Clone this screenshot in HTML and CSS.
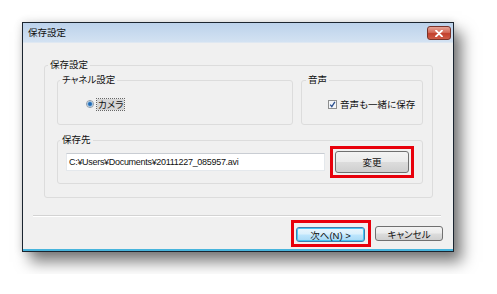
FILE: index.html
```html
<!DOCTYPE html>
<html lang="ja">
<head>
  <meta charset="UTF-8">
  <title>保存設定</title>
  <link rel="stylesheet" href="styles.css">
</head>
<body>
  <div class="dialog">
    <div class="titlebar">
      <span class="title">保存設定</span>
      <span class="close-btn">
        <svg width="8" height="7" viewBox="0 0 8 7"><path d="M1 0.5 L7 6.5 M7 0.5 L1 6.5" stroke="#fff" stroke-width="1.8" stroke-linecap="round"/></svg>
      </span>
    </div>
    <div class="dialog-body">
      <div class="group group-outer">
        <span class="group-label">保存設定</span>
        <div class="group-row">
          <div class="group group-channel">
            <span class="group-label">チャネル設定</span>
            <div class="option option-radio">
              <span class="radio"></span>
              <span class="focus-label">カメラ</span>
            </div>
          </div>
          <div class="group group-audio">
            <span class="group-label">音声</span>
            <div class="option option-check">
              <svg class="checkbox" width="9" height="9" viewBox="0 0 9 9">
                <rect x="0.5" y="0.5" width="8" height="8" fill="#f4f6f9" stroke="#8e8f8f"/>
                <path d="M2.2 4.6 L3.8 6.6 L6.9 1.8" fill="none" stroke="#2a4f8f" stroke-width="1.3"/>
              </svg>
              <span>音声も一緒に保存</span>
            </div>
          </div>
        </div>
        <div class="group group-dest">
          <span class="group-label">保存先</span>
          <div class="dest-row">
            <div class="path-field">C:¥Users¥Documents¥20111227_085957.avi</div>
            <div class="highlight highlight-change">
              <button class="btn btn-change">変更</button>
            </div>
          </div>
        </div>
      </div>
      <div class="separator"></div>
      <div class="button-row">
        <div class="highlight highlight-next">
          <button class="btn btn-default btn-next">次へ(N) &gt;</button>
        </div>
        <button class="btn btn-cancel">キャンセル</button>
      </div>
    </div>
  </div>
</body>
</html>
```

FILE: styles.css
```css
* {
  margin: 0;
  padding: 0;
  box-sizing: border-box;
}

body {
  background: #fff;
  padding: 22px;
  font-family: "Liberation Sans", "Noto Sans CJK JP", sans-serif;
  font-size: 9.5px;
  font-feature-settings: "palt";
  color: #111;
}

.dialog {
  width: 432px;
  border: 1px solid #1b2530;
  background: #f0f0f0;
  box-shadow: 8px 10px 14px rgba(0, 0, 0, 0.5), 0 0 8px rgba(0, 0, 0, 0.15);
}

/* title bar */
.titlebar {
  height: 20px;
  display: flex;
  justify-content: space-between;
  align-items: flex-start;
  padding: 3px 2px 0 5px;
  background: linear-gradient(#bcd2eb, #d3e2f2);
  border-bottom: 1px solid #dfe8f2;
}

.title {
  line-height: 13px;
  margin-top: 0;
}

.close-btn {
  width: 24px;
  height: 14px;
  display: flex;
  align-items: center;
  justify-content: center;
  border: 1px solid #7a3329;
  border-radius: 3px;
  background: linear-gradient(#e6a497, #d46a58 45%, #c2402c 55%, #cf5c47);
}

.dialog-body {
  padding: 22px 0 4px;
  box-shadow: inset 0 -2px #47b4dc;
}

/* group boxes */
.group {
  border: 1px solid #dcdcdc;
  border-radius: 3px;
}

.group-label {
  display: block;
  width: fit-content;
  line-height: 12px;
  margin-top: -7px;
  padding: 0 2px;
  background: #f0f0f0;
}

.group-outer {
  margin: 0 20px 0 21px;
  padding: 0 9px 13px 12px;
}

.group-outer > .group-label {
  margin-left: -9px;
}

.group-row {
  display: flex;
  gap: 8px;
  margin-top: 9px;
}

.group-channel {
  flex: 1;
  padding: 0 0 14px 2px;
}

.group-audio {
  width: 122px;
  padding: 0 0 14px 4px;
}

.option {
  display: flex;
  align-items: center;
  height: 12px;
  margin-top: 12px;
}

.option-radio {
  padding-left: 26px;
}

.option-check {
  padding-left: 22px;
}

.radio {
  width: 8px;
  height: 8px;
  border-radius: 50%;
  border: 1px solid #8d99a6;
  background: radial-gradient(circle, #1d5da3 0, #2f78bf 1.5px, #9cc4e8 2.5px, #f3f5f7 3px);
}

.focus-label {
  margin-left: 3px;
  padding: 0 1px;
  line-height: 11px;
  background: #d6d6d6;
  outline: 1px dotted #666;
}

.checkbox {
  margin-right: 3px;
}

.group-dest {
  margin-top: 15px;
  padding: 0 0 5px 2px;
}

.dest-row {
  display: flex;
  align-items: center;
}

.path-field {
  flex: 1;
  height: 18px;
  margin: 0 5px 0 6px;
  padding-left: 2px;
  line-height: 16px;
  font-size: 9px;
  letter-spacing: -0.3px;
  background: #fff;
  border: 1px solid #e4e8ec;
  border-top-color: #c9cdd3;
  white-space: nowrap;
}

/* red marks */
.highlight {
  border: 3px solid #e8000b;
  padding: 2px;
}

.highlight-change {
  margin-right: 8px;
}

.highlight-next {
  padding: 4px 3px 2px 2px;
}

/* buttons */
.btn {
  display: flex;
  align-items: center;
  justify-content: center;
  font: inherit;
  color: #111;
  border: 1px solid #707070;
  border-radius: 3px;
  background: linear-gradient(#f3f3f3, #ebebeb 48%, #dcdcdc 52%, #cfcfcf);
}

.btn-change {
  width: 74px;
  height: 22px;
}

.btn-next,
.btn-cancel {
  height: 15px;
}

.btn-next {
  width: 69px;
}

.btn-cancel {
  width: 68px;
}

.btn-default {
  border-color: #3c7fb1;
  background: linear-gradient(#eaf6fd, #d9f0fc 48%, #bee6fd 52%, #a7d9f5);
  box-shadow: inset 0 0 0 1px #48c7f3;
}

.separator {
  height: 2px;
  margin: 17px 12px 0 10px;
  border-top: 1px solid #d3d3d3;
  border-bottom: 1px solid #fff;
}

.button-row {
  display: flex;
  justify-content: flex-end;
  align-items: center;
  gap: 4px;
  margin-top: 3px;
  padding-right: 10px;
}
```
